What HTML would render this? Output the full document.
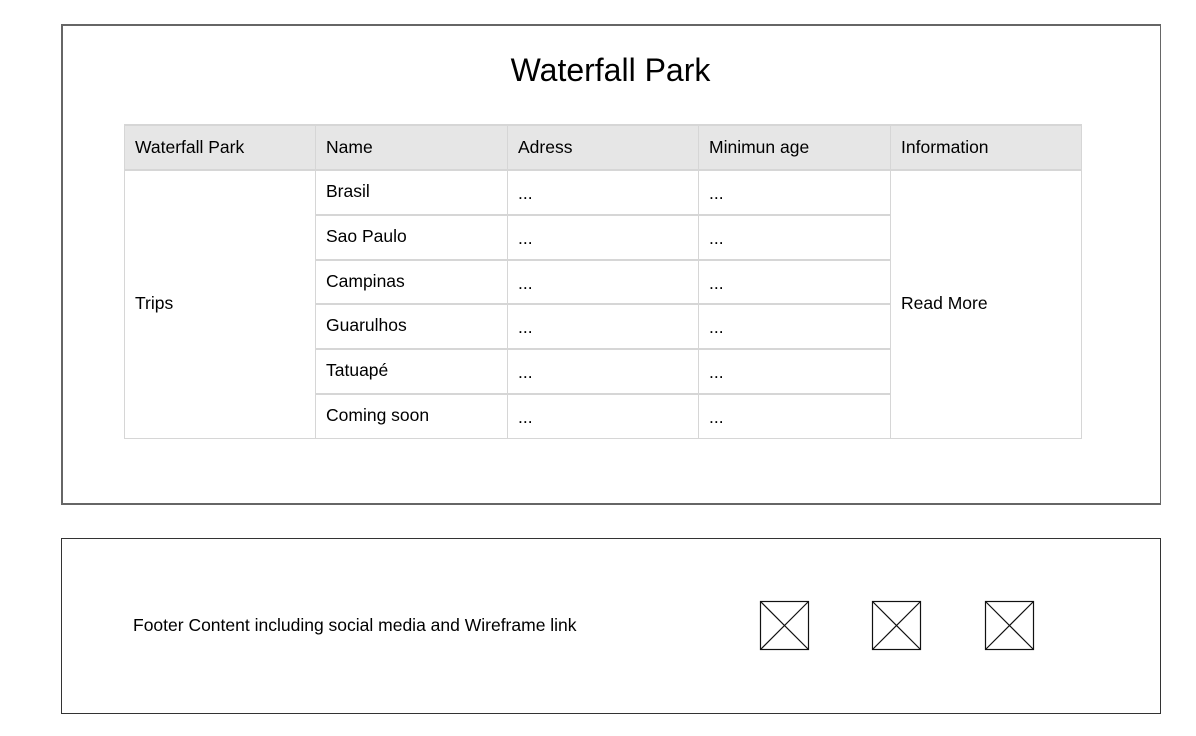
<!DOCTYPE html>
<html><head><style>
body{margin:0;width:1196px;height:736px;background:#fff;font-family:"Liberation Sans",Arial,sans-serif;color:#000;position:relative;overflow:hidden}
.box{position:absolute;border:1px solid #555;box-sizing:border-box}
.c{position:absolute;box-sizing:border-box;font-size:17.5px;padding-left:11px;display:flex;align-items:center}
.l{position:absolute;background:#d6d6d6}
</style></head><body>
<div class="box" style="left:61px;top:24px;width:1100px;height:481px;border-width:2px 1px 2px 2px;border-color:#666"></div>
<div style="position:absolute;left:0;width:1221px;top:52px;text-align:center;font-size:32px">Waterfall Park</div>
<div style="position:absolute;left:124px;top:124px;width:958px;height:46px;background:#e6e6e6"></div>
<div class="l" style="left:124px;top:124px;width:958px;height:2px"></div>
<div class="l" style="left:124px;top:169px;width:958px;height:2px"></div>
<div class="l" style="left:124px;top:438px;width:958px;height:1px"></div>
<div class="l" style="left:124px;top:124px;width:1px;height:315px"></div>
<div class="l" style="left:315px;top:124px;width:1px;height:315px"></div>
<div class="l" style="left:507px;top:124px;width:1px;height:315px"></div>
<div class="l" style="left:698px;top:124px;width:1px;height:315px"></div>
<div class="l" style="left:890px;top:124px;width:1px;height:315px"></div>
<div class="l" style="left:1081px;top:124px;width:1px;height:315px"></div>
<div class="l" style="left:315px;top:214px;width:575px;height:2px"></div>
<div class="l" style="left:315px;top:259px;width:575px;height:2px"></div>
<div class="l" style="left:315px;top:303px;width:575px;height:2px"></div>
<div class="l" style="left:315px;top:348px;width:575px;height:2px"></div>
<div class="l" style="left:315px;top:393px;width:575px;height:2px"></div>
<div class="c" style="left:124px;top:125px;height:45px">Waterfall Park</div>
<div class="c" style="left:315px;top:125px;height:45px">Name</div>
<div class="c" style="left:507px;top:125px;height:45px">Adress</div>
<div class="c" style="left:698px;top:125px;height:45px">Minimun age</div>
<div class="c" style="left:890px;top:125px;height:45px">Information</div>
<div class="c" style="left:124px;top:170px;height:266px">Trips</div>
<div class="c" style="left:890px;top:170px;height:266px">Read More</div>
<div class="c" style="left:315px;top:170px;height:42px">Brasil</div>
<div class="c" style="left:315px;top:215px;height:42px">Sao Paulo</div>
<div class="c" style="left:315px;top:260px;height:42px">Campinas</div>
<div class="c" style="left:315px;top:304px;height:42px">Guarulhos</div>
<div class="c" style="left:315px;top:349px;height:42px">Tatuapé</div>
<div class="c" style="left:315px;top:394px;height:42px">Coming soon</div>
<div class="c" style="left:507px;top:172px;height:42px">...</div>
<div class="c" style="left:507px;top:217px;height:42px">...</div>
<div class="c" style="left:507px;top:262px;height:42px">...</div>
<div class="c" style="left:507px;top:306px;height:42px">...</div>
<div class="c" style="left:507px;top:351px;height:42px">...</div>
<div class="c" style="left:507px;top:396px;height:42px">...</div>
<div class="c" style="left:698px;top:172px;height:42px">...</div>
<div class="c" style="left:698px;top:217px;height:42px">...</div>
<div class="c" style="left:698px;top:262px;height:42px">...</div>
<div class="c" style="left:698px;top:306px;height:42px">...</div>
<div class="c" style="left:698px;top:351px;height:42px">...</div>
<div class="c" style="left:698px;top:396px;height:42px">...</div>
<div class="box" style="left:61px;top:538px;width:1100px;height:176px;border-color:#333"></div>
<div style="position:absolute;left:133px;top:615px;font-size:17.5px">Footer Content including social media and Wireframe link</div>
<svg style="position:absolute;left:0;top:0" width="1196" height="736">
<g fill="none" stroke="#111" stroke-width="1.2">
<rect x="760.5" y="601.5" width="48" height="48"/><path d="M760.5 601.5L808.5 649.5M808.5 601.5L760.5 649.5"/>
<rect x="872.5" y="601.5" width="48" height="48"/><path d="M872.5 601.5L920.5 649.5M920.5 601.5L872.5 649.5"/>
<rect x="985.5" y="601.5" width="48" height="48"/><path d="M985.5 601.5L1033.5 649.5M1033.5 601.5L985.5 649.5"/>
</g></svg>
</body></html>
